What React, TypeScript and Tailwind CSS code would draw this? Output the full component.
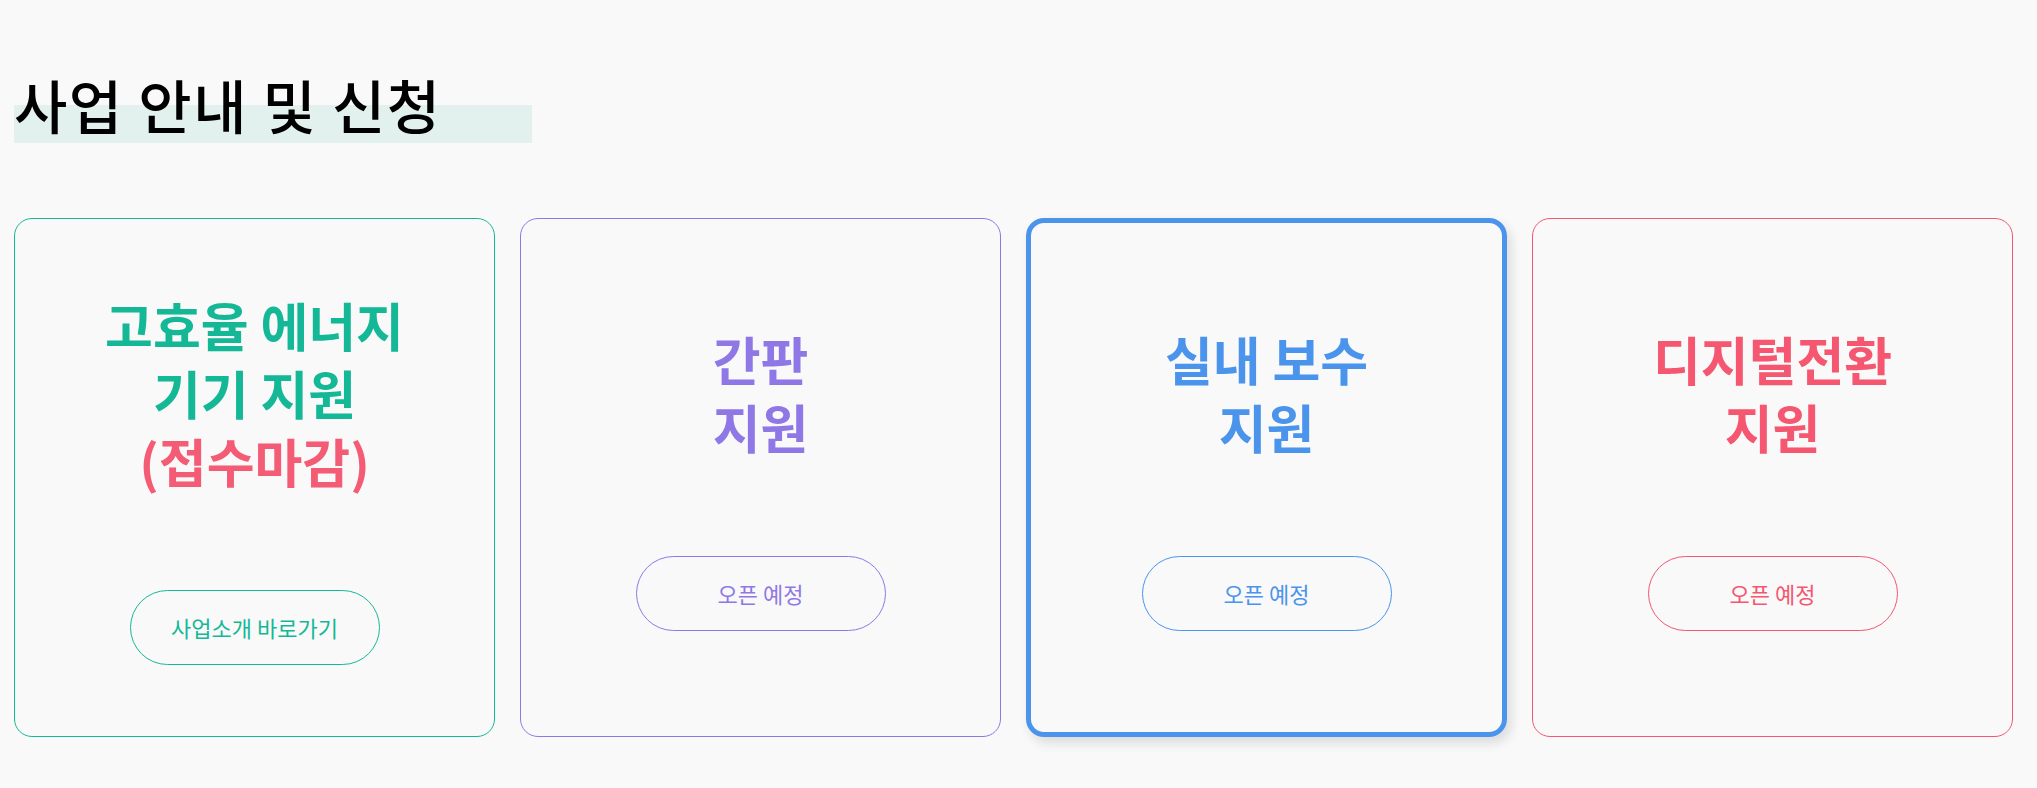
import React from "react";

type Program = {
  title: React.ReactNode;
  label: string;
  border: string;
  text: string;
  active?: boolean;
};

const programs: Program[] = [
  {
    title: (
      <>
        고효율 에너지
        <br />
        기기 지원
        <br />
        <span className="text-[#f45b74]">(접수마감)</span>
      </>
    ),
    label: "사업소개 바로가기",
    border: "border-[#15b896]",
    text: "text-[#15b896]",
  },
  {
    title: (
      <>
        간판
        <br />
        지원
      </>
    ),
    label: "오픈 예정",
    border: "border-[#8f78e6]",
    text: "text-[#8f78e6]",
  },
  {
    title: (
      <>
        실내 보수
        <br />
        지원
      </>
    ),
    label: "오픈 예정",
    border: "border-[#4a94ec]",
    text: "text-[#4a94ec]",
    active: true,
  },
  {
    title: (
      <>
        디지털전환
        <br />
        지원
      </>
    ),
    label: "오픈 예정",
    border: "border-[#f4576f]",
    text: "text-[#f4576f]",
  },
];

const ProgramCard = ({ program }: { program: Program }) => {
  const { title, label, border, text, active } = program;
  return (
    <div
      className={`flex h-[519px] w-[481px] flex-col items-center justify-center rounded-[18px] ${border} ${
        active ? "border-[5px] shadow-[4px_6px_12px_rgba(0,0,0,0.12)]" : "border"
      }`}
    >
      <h3 className={`text-center text-[52px] font-bold leading-[68px] ${text}`}>{title}</h3>
      <button
        className={`mt-[95px] flex h-[75px] w-[250px] items-center justify-center rounded-full border bg-transparent text-[22px] ${border} ${text}`}
      >
        {label}
      </button>
    </div>
  );
};

export default function App() {
  return (
    <div
      className="min-h-[788px] w-full bg-[#f9f9f9] pl-[14px] pt-[64px]"
      style={{ fontFamily: '"Noto Sans CJK KR", "Noto Sans", sans-serif' }}
    >
      <div className="relative h-[80px]">
        <div className="absolute left-0 top-[41px] h-[38px] w-[518px] bg-[#e2f1ee]" />
        <h2 className="relative text-[58px] font-medium leading-[80px] tracking-[1.5px] text-black">사업 안내 및 신청</h2>
      </div>
      <div className="mt-[74px] flex gap-[25px]">
        {programs.map((p, i) => (
          <ProgramCard key={i} program={p} />
        ))}
      </div>
    </div>
  );
}
